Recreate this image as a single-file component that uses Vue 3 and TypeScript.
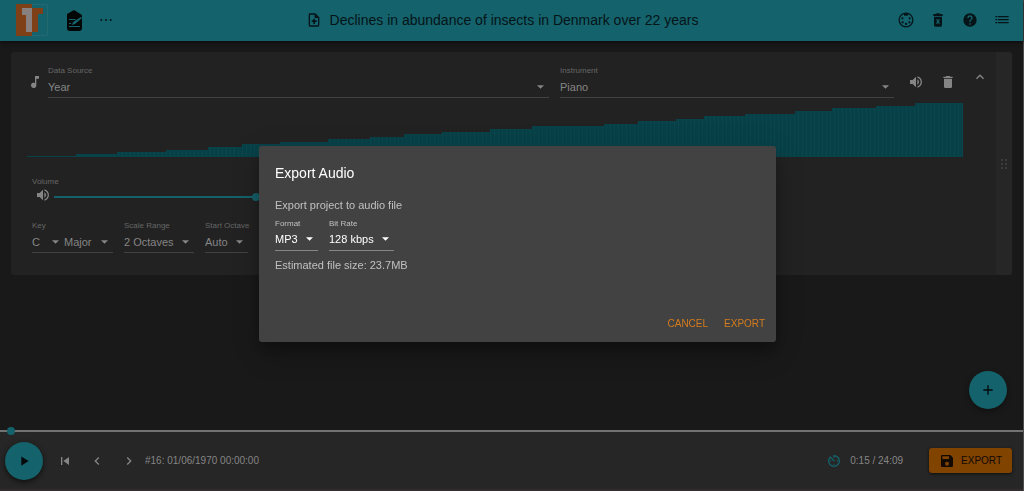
<script setup lang="ts">
import { computed, ref } from 'vue'

const icons = {
  note: 'M12 3v10.55A4 4 0 1 0 14 17V7h4V3h-6z',
  volume: 'M14 3.23v2.06c2.89.86 5 3.54 5 6.71s-2.11 5.84-5 6.7v2.07c4-.91 7-4.49 7-8.77s-3-7.86-7-8.77M16.5 12c0-1.77-1-3.29-2.5-4.03V16c1.5-.71 2.5-2.24 2.5-4M3 9v6h4l5 5V4L7 9H3z',
  trash: 'M19 4h-3.5l-1-1h-5l-1 1H5v2h14V4M6 19a2 2 0 0 0 2 2h8a2 2 0 0 0 2-2V7H6v12z',
  clear: 'M19 3h-4l-1-1h-4L9 3H5v3h14V3M6 20a2 2 0 0 0 2 2h8a2 2 0 0 0 2-2V7H6v13zM9 11h2l1 1.6 1-1.6h2l-1.8 3L15 17.500h-2l-1-1.900-1 1.900H9l1.800-3.500z',
  help: 'M15.07 11.25l-.9.92C13.45 12.89 13 13.5 13 15h-2v-.5c0-1.11.45-2.11 1.17-2.83l1.24-1.26c.37-.36.59-.86.59-1.41a2 2 0 0 0-4 0H8a4 4 0 0 1 8 0c0 .88-.36 1.67-.93 2.25M13 19h-2v-2h2v2M12 2a10 10 0 1 0 0 20 10 10 0 0 0 0-20z',
  list: 'M2 6h3v2H2zM6 6h16v2H6zM2 10.500h3v2H2zM6 10.500h16v2H6zM2 15h3v2H2zM6 15h16v2H6z',
  up: 'M7.41 15.41L12 10.83l4.59 4.58L18 14l-6-6-6 6z',
  left: 'M15.41 16.58L10.83 12l4.58-4.59L14 6l-6 6 6 6z',
  right: 'M8.59 16.58L13.17 12 8.59 7.41 10 6l6 6-6 6z',
  previous: 'M6 18V6h2v12H6m3.500-6L18 6v12z',
  play: 'M8 5.140v14l11-7z',
  plus: 'M19 13h-6v6h-2v-6H5v-2h6V5h2v6h6z',
  save: 'M15 9H5V5h10v4m-3 10a3 3 0 1 1 0-6 3 3 0 0 1 0 6m5-16H5a2 2 0 0 0-2 2v14a2 2 0 0 0 2 2h14a2 2 0 0 0 2-2V7l-4-4z',
  timer: 'M11 17a1 1 0 1 0 2 0 1 1 0 0 0-2 0m0-14v4h2V5.080c3.390.49 6 3.390 6 6.920a7 7 0 0 1-14 0c0-1.680.59-3.220 1.580-4.420L12 13l1.410-1.410-6.800-6.800v.020C4.420 6.450 3 9.050 3 12a9 9 0 1 0 9-9m6 9a1 1 0 1 0-2 0 1 1 0 0 0 2 0M6 12a1 1 0 1 0 2 0 1 1 0 0 0-2 0z',
  file: 'M6 2a2 2 0 0 0-2 2v16a2 2 0 0 0 2 2h12a2 2 0 0 0 2-2V8l-6-6H6m0 2h7v5h5v11H6V4m5 6v2.500H8.500v2.500H11V18h2.500v-3H16v-2.500h-2.500V10z',
  notebook: 'M8 0L1 4v14a3 3 0 0 0 3 3h9a3 3 0 0 0 3-3V5zM3 9h7l-1 1H3zM15 7l1 1-7 6-3 1 1-3zM3 13h2v1H3zM3 16h11v1H3z',
}

const dataSource = ref('Year')
const instrument = ref('Piano')
const tonic = ref('C')
const mode = ref('Major')
const scaleRange = ref('2 Octaves')
const startOctave = ref('Auto')
const format = ref('MP3')
const bitRate = ref('128 kbps')
const volume = ref(100)
const position = ref(15)

// Start and height of each year's plateau in the preview chart.
const steps = [
  [0, 1], [49, 3], [90, 5], [139, 7], [181, 10], [215, 13], [253, 15], [301, 18],
  [343, 20], [377, 23], [415, 25], [463, 28], [505, 31], [577, 33], [611, 36],
  [649, 38], [677, 41], [718, 43], [768, 46], [805, 49], [849, 51], [888, 54],
]
const chartPath = computed(() => {
  const tops = steps.map(([, h], i) => `V${54 - h}H${i + 1 < steps.length ? steps[i + 1][0] : 936}`)
  return `M0 54${tops.join('')}V54Z`
})
</script>

<template>
  <div class="page">
    <header class="topbar">
      <div class="brand">
        <svg class="logo" viewBox="0 0 32 32" role="img" aria-label="Logo">
          <path d="M.5.500h31v31H.500z" fill="none" stroke="#23696f" />
          <path d="M0 0h16v32H0z" fill="#7f4018" />
          <path d="M16 4h11v6h-5v18h-6z" fill="#7f4018" />
          <path d="M6 4h10v24h-6V11H6z" fill="#87807e" />
        </svg>
        <button class="icon-btn" aria-label="Edit project"><svg class="note-icon" viewBox="0 0 17 21"><path :d="icons.notebook" fill-rule="evenodd" /></svg></button>
        <button class="icon-btn" aria-label="More">
          <svg class="icon" viewBox="0 0 24 24"><circle cx="5" cy="12" r="1.500" /><circle cx="12" cy="12" r="1.500" /><circle cx="19" cy="12" r="1.500" /></svg>
        </button>
      </div>
      <h1 class="title"><svg class="icon" viewBox="0 0 24 24"><path :d="icons.file" fill-rule="evenodd" /></svg>Declines in abundance of insects in Denmark over 22 years</h1>
      <nav class="tools" aria-label="Project">
        <button class="icon-btn" aria-label="MIDI">
          <svg class="icon" viewBox="0 0 24 24">
            <circle cx="12" cy="12" r="10.300" fill="none" stroke="currentColor" stroke-width="2" />
            <path d="M9 2h6v3.500H9z" />
            <circle cx="6.500" cy="9.500" r="1.700" /><circle cx="17.500" cy="9.500" r="1.700" />
            <circle cx="7" cy="15.500" r="1.700" /><circle cx="17" cy="15.500" r="1.700" /><circle cx="12" cy="18" r="1.700" />
          </svg>
        </button>
        <button class="icon-btn" aria-label="Clear"><svg class="icon" viewBox="0 0 24 24"><path :d="icons.clear" fill-rule="evenodd" /></svg></button>
        <button class="icon-btn" aria-label="Help"><svg class="icon" viewBox="0 0 24 24"><path :d="icons.help" fill-rule="evenodd" /></svg></button>
        <button class="icon-btn" aria-label="Tracks"><svg class="icon" viewBox="0 0 24 24"><path :d="icons.list" /></svg></button>
      </nav>
    </header>

    <main class="content">
      <section class="card">
        <div class="track">
          <div class="source-row">
            <svg class="icon lead" viewBox="0 0 24 24"><path :d="icons.note" /></svg>
            <div class="field wide">
              <label for="source">Data Source</label>
              <div class="pick"><select id="source" v-model="dataSource"><option>Year</option></select><svg viewBox="0 0 8 4"><path d="M0 0h8L4 4z" /></svg></div>
            </div>
            <div class="field mid">
              <label for="instrument">Instrument</label>
              <div class="pick"><select id="instrument" v-model="instrument"><option>Piano</option></select><svg viewBox="0 0 8 4"><path d="M0 0h8L4 4z" /></svg></div>
            </div>
            <div class="track-tools">
              <button class="icon-btn" aria-label="Mute"><svg class="icon" viewBox="0 0 24 24"><path :d="icons.volume" /></svg></button>
              <button class="icon-btn" aria-label="Delete track"><svg class="icon" viewBox="0 0 24 24"><path :d="icons.trash" /></svg></button>
              <button class="icon-btn collapse" aria-label="Collapse"><svg class="icon" viewBox="0 0 24 24"><path :d="icons.up" /></svg></button>
            </div>
          </div>

          <svg class="chart" viewBox="0 0 936 54" preserveAspectRatio="none" role="img" aria-label="Year values">
            <defs>
              <pattern id="bars" width="4" height="54" patternUnits="userSpaceOnUse">
                <path d="M0 0h4v54H0z" fill="#084047" /><path d="M3 0h1v54H3z" fill="#0a464d" />
              </pattern>
            </defs>
            <path :d="chartPath" fill="url(#bars)" />
          </svg>

          <div class="volume">
            <label for="volume">Volume</label>
            <div class="volume-row">
              <svg class="icon" viewBox="0 0 24 24"><path :d="icons.volume" /></svg>
              <input id="volume" v-model="volume" class="slider" type="range" min="0" max="100" />
            </div>
          </div>

          <div class="scale-row">
            <div class="field key">
              <label for="tonic">Key</label>
              <div class="pair">
                <div class="pick tonic"><select id="tonic" v-model="tonic"><option>C</option></select><svg viewBox="0 0 8 4"><path d="M0 0h8L4 4z" /></svg></div>
                <div class="pick mode"><select v-model="mode" aria-label="Mode"><option>Major</option></select><svg viewBox="0 0 8 4"><path d="M0 0h8L4 4z" /></svg></div>
              </div>
            </div>
            <div class="field range">
              <label for="scale">Scale Range</label>
              <div class="pick"><select id="scale" v-model="scaleRange"><option>2 Octaves</option></select><svg viewBox="0 0 8 4"><path d="M0 0h8L4 4z" /></svg></div>
            </div>
            <div class="field octave">
              <label for="octave">Start Octave</label>
              <div class="pick"><select id="octave" v-model="startOctave"><option>Auto</option></select><svg viewBox="0 0 8 4"><path d="M0 0h8L4 4z" /></svg></div>
            </div>
          </div>
        </div>
        <div class="grip">
          <svg viewBox="0 0 8 12"><circle v-for="n in 6" :key="n" :cx="n % 2 ? 2 : 6" :cy="Math.ceil(n / 2) * 4 - 2" r="1" /></svg>
        </div>
      </section>
    </main>

    <button class="round add" aria-label="Add track"><svg class="icon" viewBox="0 0 24 24"><path :d="icons.plus" /></svg></button>

    <footer class="player">
      <input v-model="position" class="slider seek" type="range" min="0" max="1449" aria-label="Position" />
      <div class="controls">
        <button class="round" aria-label="Play"><svg class="icon" viewBox="0 0 24 24"><path :d="icons.play" /></svg></button>
        <div class="transport">
          <button class="icon-btn" aria-label="Restart"><svg class="icon" viewBox="0 0 24 24"><path :d="icons.previous" /></svg></button>
          <button class="icon-btn" aria-label="Previous"><svg class="icon" viewBox="0 0 24 24"><path :d="icons.left" /></svg></button>
          <button class="icon-btn" aria-label="Next"><svg class="icon" viewBox="0 0 24 24"><path :d="icons.right" /></svg></button>
        </div>
        <span class="stamp">#16: 01/06/1970 00:00:00</span>
        <svg class="icon timer" viewBox="0 0 24 24"><path :d="icons.timer" /></svg>
        <span class="time">0:15 / 24:09</span>
        <button class="save"><svg class="icon" viewBox="0 0 24 24"><path :d="icons.save" fill-rule="evenodd" /></svg>EXPORT</button>
      </div>
    </footer>

    <div class="overlay">
      <section class="dialog" role="dialog" aria-modal="true" aria-labelledby="dialog-title">
        <h2 id="dialog-title">Export Audio</h2>
        <p>Export project to audio file</p>
        <div class="options">
          <div class="field format">
            <label for="format">Format</label>
            <div class="pick"><select id="format" v-model="format"><option>MP3</option></select><svg viewBox="0 0 8 4"><path d="M0 0h8L4 4z" /></svg></div>
          </div>
          <div class="field rate">
            <label for="rate">Bit Rate</label>
            <div class="pick"><select id="rate" v-model="bitRate"><option>128 kbps</option></select><svg viewBox="0 0 8 4"><path d="M0 0h8L4 4z" /></svg></div>
          </div>
        </div>
        <p>Estimated file size: 23.7MB</p>
        <div class="actions"><button>CANCEL</button><button>EXPORT</button></div>
      </section>
    </div>
  </div>
</template>

<style>
body {
  margin: 0;
  background: #191919;
}
</style>

<style scoped>
.page {
  box-sizing: border-box;
  min-height: 100vh;
  display: flex;
  flex-direction: column;
  border-right: 1px solid #4c4c4c;
  background: #191919;
  color: #858585;
  font-family: "Liberation Sans", Arial, sans-serif;
  font-size: 11px;
}
button {
  font: inherit;
  color: inherit;
  border: 0;
  padding: 0;
  background: none;
  cursor: pointer;
}
svg {
  display: block;
  fill: currentColor;
}
.icon {
  width: 16px;
  height: 16px;
  flex: none;
}
.icon-btn {
  width: 22px;
  height: 22px;
  display: grid;
  place-items: center;
}

.topbar {
  height: 41px;
  display: flex;
  align-items: center;
  justify-content: space-between;
  padding: 0 10px 1px 16px;
  box-sizing: border-box;
  background: #14626b;
  color: #041418;
  box-shadow: 0 1px 4px #0a0a0a;
}
.brand,
.tools {
  display: flex;
  align-items: center;
  gap: 10px;
}
.logo {
  width: 32px;
  height: 32px;
  margin-right: 5px;
}
.note-icon {
  width: 17px;
  height: 21px;
  color: #020607;
}
.title {
  display: flex;
  align-items: center;
  gap: 8px;
  margin: 0 8px 0 0;
  font-size: 14px;
  font-weight: 400;
  white-space: nowrap;
}

.content {
  flex: 1;
  padding: 11px 11px 0;
}
.card {
  display: flex;
  border-radius: 3px;
  overflow: hidden;
  background: #222222;
}
.track {
  flex: 1;
  padding: 14px 5px 22px 16px;
}
.grip {
  width: 16px;
  display: grid;
  place-items: center;
  background: #262626;
  color: #454545;
}
.grip svg {
  width: 8px;
  height: 12px;
}
.source-row {
  display: flex;
}
.lead {
  margin: 8px 5px 0 0;
}
.wide {
  flex: 3;
}
.mid {
  flex: 2;
  margin: 0 11px;
}
.track-tools {
  display: flex;
  align-items: center;
  gap: 10px;
}
.collapse {
  align-self: flex-start;
}

.field label,
.volume label {
  display: block;
  font-size: 8px;
  line-height: 10px;
  color: #666666;
  white-space: nowrap;
}
.field {
  border-bottom: 1px solid #424242;
}
.pick {
  display: grid;
  align-items: center;
}
.pick > * {
  grid-area: 1 / 1;
}
.pick select {
  width: 100%;
  height: 21px;
  margin: 0;
  padding: 0;
  border: 0;
  appearance: none;
  background: transparent;
  color: inherit;
  font: inherit;
}
.pick svg {
  width: 7px;
  height: 4px;
  margin-right: 5px;
  justify-self: end;
  pointer-events: none;
}
.pair {
  display: flex;
}
.tonic {
  width: 32px;
}
.mode {
  flex: 1;
}
.key {
  width: 81px;
}
.range {
  width: 70px;
}
.octave {
  width: 43px;
}

.chart {
  width: calc(100% - 28px);
  height: 54px;
  margin: 5px 0 20px;
}
.volume {
  width: 228px;
  margin: 0 0 14px 5px;
}
.volume-row {
  display: flex;
  align-items: center;
  gap: 3px;
  height: 20px;
}
.volume-row .icon {
  margin: 0 0 4px 3px;
}
.volume-row .slider {
  flex: 1;
  min-width: 0;
}
.scale-row {
  display: flex;
  gap: 11px;
  padding-left: 5px;
}

.slider {
  height: 8px;
  margin: 0;
  appearance: none;
  background: linear-gradient(#14626b, #14626b) center / 100% 2px no-repeat;
}
.slider::-webkit-slider-thumb {
  appearance: none;
  width: 8px;
  height: 8px;
  border-radius: 50%;
  background: #14626b;
}

.round {
  width: 38px;
  height: 38px;
  display: grid;
  place-items: center;
  flex: none;
  border-radius: 50%;
  background: #14626b;
  color: #050b0c;
  box-shadow: 0 2px 5px #101010;
}
.add {
  position: fixed;
  right: 17px;
  bottom: 82px;
}
.player {
  overflow-x: clip;
  background: #262626;
  border-bottom: 2px solid #332b2e;
}
.seek {
  display: block;
  width: calc(100% + 8px);
  margin: -5px -4px -3px;
  background: linear-gradient(#727272, #727272) center / 100% 2px no-repeat;
}
.controls {
  display: flex;
  align-items: center;
  height: 57px;
  padding: 0 11px 0 5px;
  font-size: 10px;
}
.transport {
  display: flex;
  gap: 10px;
  margin: 0 5px 0 11px;
}
.stamp {
  flex: 1;
}
.timer {
  color: #14626b;
  margin-right: 8px;
}
.time {
  margin-right: 26px;
}
.save {
  display: flex;
  align-items: center;
  gap: 6px;
  height: 25px;
  padding: 0 10px;
  border-radius: 3px;
  background: #804300;
  color: #120900;
  box-shadow: 0 1px 3px #101010;
}

.overlay {
  position: fixed;
  inset: 0;
  display: grid;
  place-items: center;
  padding: 0 0 4px 11px;
  pointer-events: none;
}
.dialog {
  box-sizing: border-box;
  width: 100%;
  max-width: 517px;
  min-height: 196px;
  display: flex;
  flex-direction: column;
  padding: 18px 6px 6px 16px;
  border-radius: 3px;
  background: #424242;
  color: #c0c0c0;
  box-shadow: 0 8px 12px rgba(0, 0, 0, 0.2), 0 16px 26px rgba(0, 0, 0, 0.14), 0 6px 32px rgba(0, 0, 0, 0.12);
  pointer-events: auto;
}
.dialog h2 {
  margin: 0 0 15px;
  font-size: 14px;
  line-height: 18px;
  font-weight: 400;
  color: #ffffff;
}
.dialog p {
  margin: 0;
  line-height: 16px;
}
.options {
  display: flex;
  gap: 11px;
  margin: 6px 0;
  color: #ffffff;
}
.options .field {
  border-color: #868686;
}
.options label {
  color: #c0c0c0;
}
.format {
  width: 43px;
}
.rate {
  width: 65px;
}
.actions {
  display: flex;
  justify-content: flex-end;
  gap: 6px;
  margin-top: auto;
}
.actions button {
  height: 24px;
  padding: 0 5px;
  font-size: 10px;
  color: #d57c1c;
}
</style>
